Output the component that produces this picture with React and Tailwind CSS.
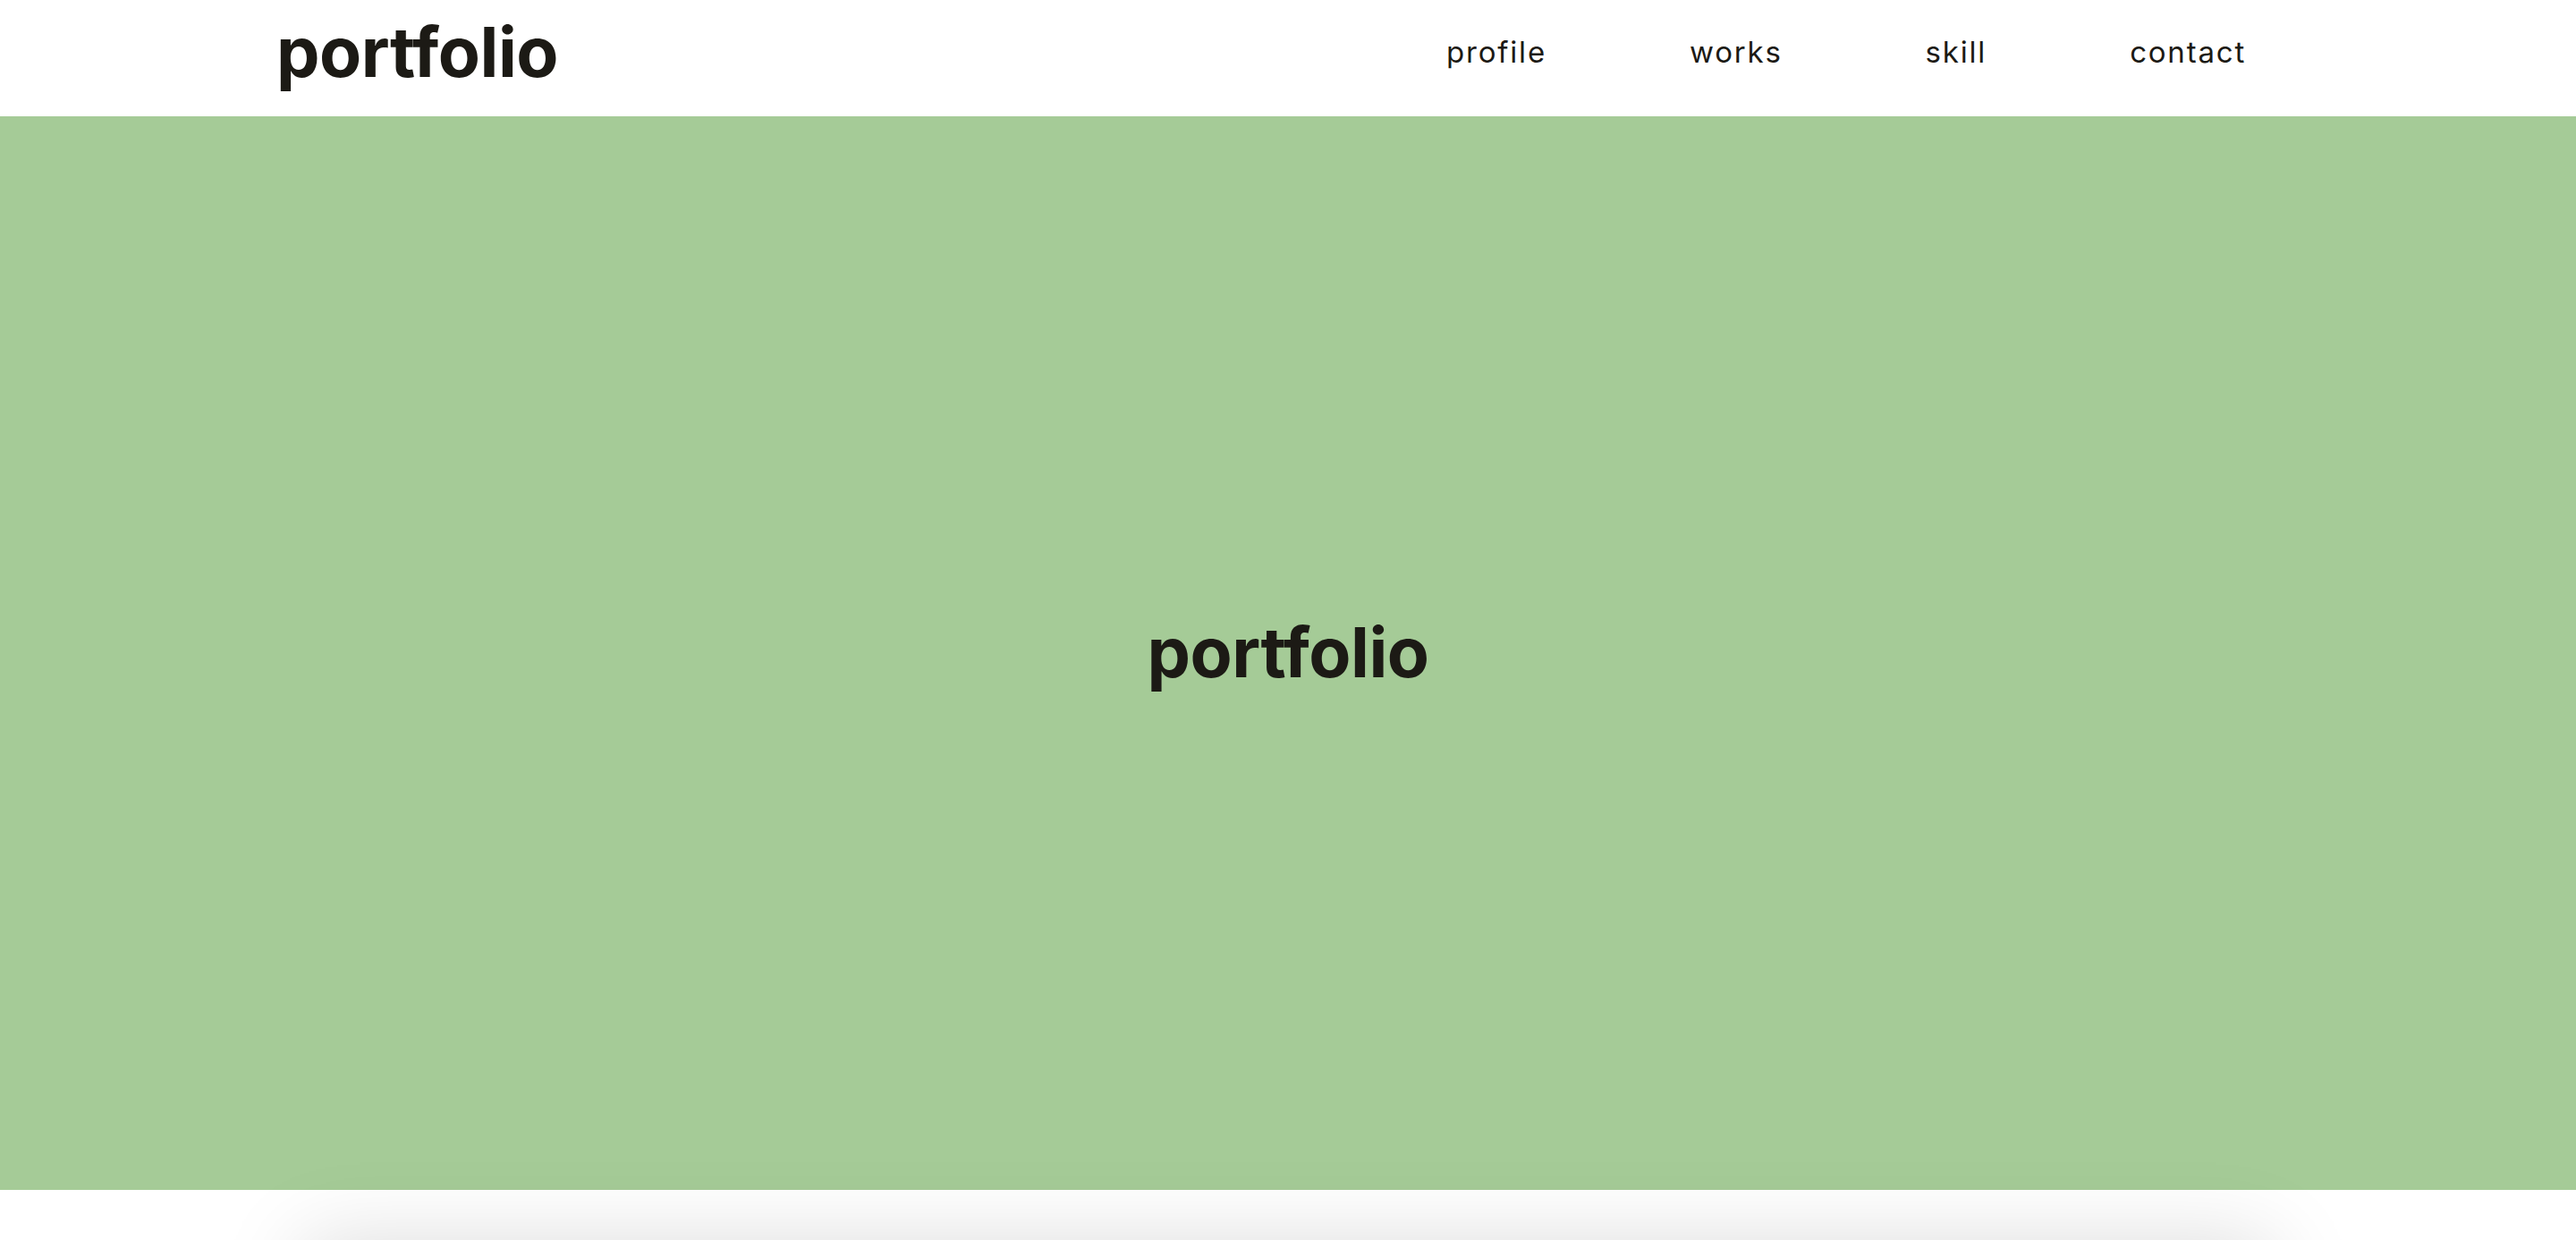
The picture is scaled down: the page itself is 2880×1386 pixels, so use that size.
export default function App() {
  return (
    <div className="min-h-screen bg-white text-[#1c1a15]" style={{ fontFamily: 'Inter, "Noto Sans", sans-serif' }}>
      <header className="h-[130px] flex items-center justify-between pl-[309px] pr-[369px] bg-white">
        <h1 className="text-[77px] font-bold tracking-[-0.5px] leading-none mb-[14px]">portfolio</h1>
        <nav>
          <ul className="flex items-center gap-[160px] text-[33px] tracking-[1.8px] leading-none mb-[14px]">
            <li>profile</li>
            <li>works</li>
            <li>skill</li>
            <li>contact</li>
          </ul>
        </nav>
      </header>
      <section className="h-[1200px] bg-[#a5cb97] flex items-center justify-center">
        <h2 className="text-[77px] font-bold tracking-[-0.5px] leading-none mb-[2px]">portfolio</h2>
      </section>
      <section className="px-[340px] pt-[60px] pb-[200px]">
        <div className="h-[600px] bg-white shadow-[0_0_90px_rgba(0,0,0,0.15)]"></div>
      </section>
    </div>
  );
}
